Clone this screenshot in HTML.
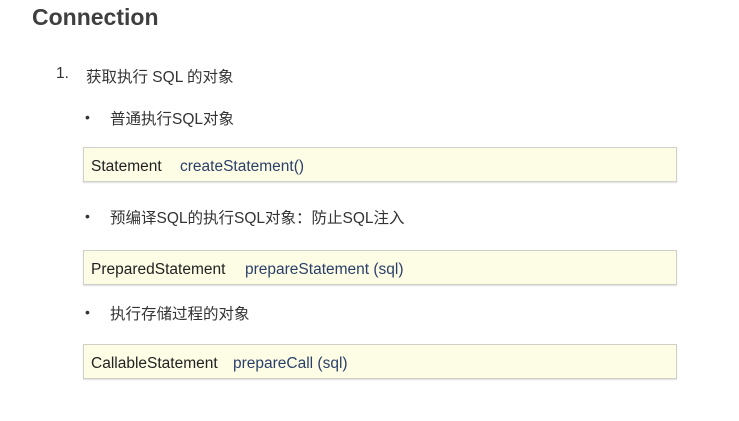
<!DOCTYPE html>
<html><head><meta charset="utf-8"><style>
body{margin:0;width:739px;height:421px;background:#fff;position:relative;overflow:hidden;font-family:"Liberation Sans","Noto Sans CJK SC",sans-serif;color:#333}
.a{position:absolute;white-space:nowrap}
.t{left:32px;top:4px;font-size:23px;font-weight:bold;color:#3f3f3f}
.l{font-size:15.5px;color:#333}
.b{font-size:14px;color:#333}
.box{position:absolute;left:83px;width:592px;height:33px;background:#fdfce4;border:1px solid #d0d0c8;box-shadow:0 1px 1px #ddd}
.box span{position:absolute;top:10px;font-size:15.5px;color:#222}
.box .m{color:#2b3f6b}
</style></head><body>
<div class="a t">Connection</div>
<div class="a l" style="left:56px;top:65px">1.</div>
<div class="a l" style="left:86px;top:65px">获取执行 SQL 的对象</div>
<div class="a b" style="left:85px;top:109px">•</div>
<div class="a l" style="left:110px;top:107px">普通执行SQL对象</div>
<div class="box" style="top:147px"><span style="left:7px">Statement</span><span class="m" style="left:96px">createStatement()</span></div>
<div class="a b" style="left:85px;top:208px">•</div>
<div class="a l" style="left:110px;top:206px">预编译SQL的执行SQL对象：防止SQL注入</div>
<div class="box" style="top:250px"><span style="left:7px">PreparedStatement</span><span class="m" style="left:161px">prepareStatement (sql)</span></div>
<div class="a b" style="left:85px;top:304px">•</div>
<div class="a l" style="left:110px;top:302px">执行存储过程的对象</div>
<div class="box" style="top:344px"><span style="left:7px">CallableStatement</span><span class="m" style="left:149px">prepareCall (sql)</span></div>
</body></html>
